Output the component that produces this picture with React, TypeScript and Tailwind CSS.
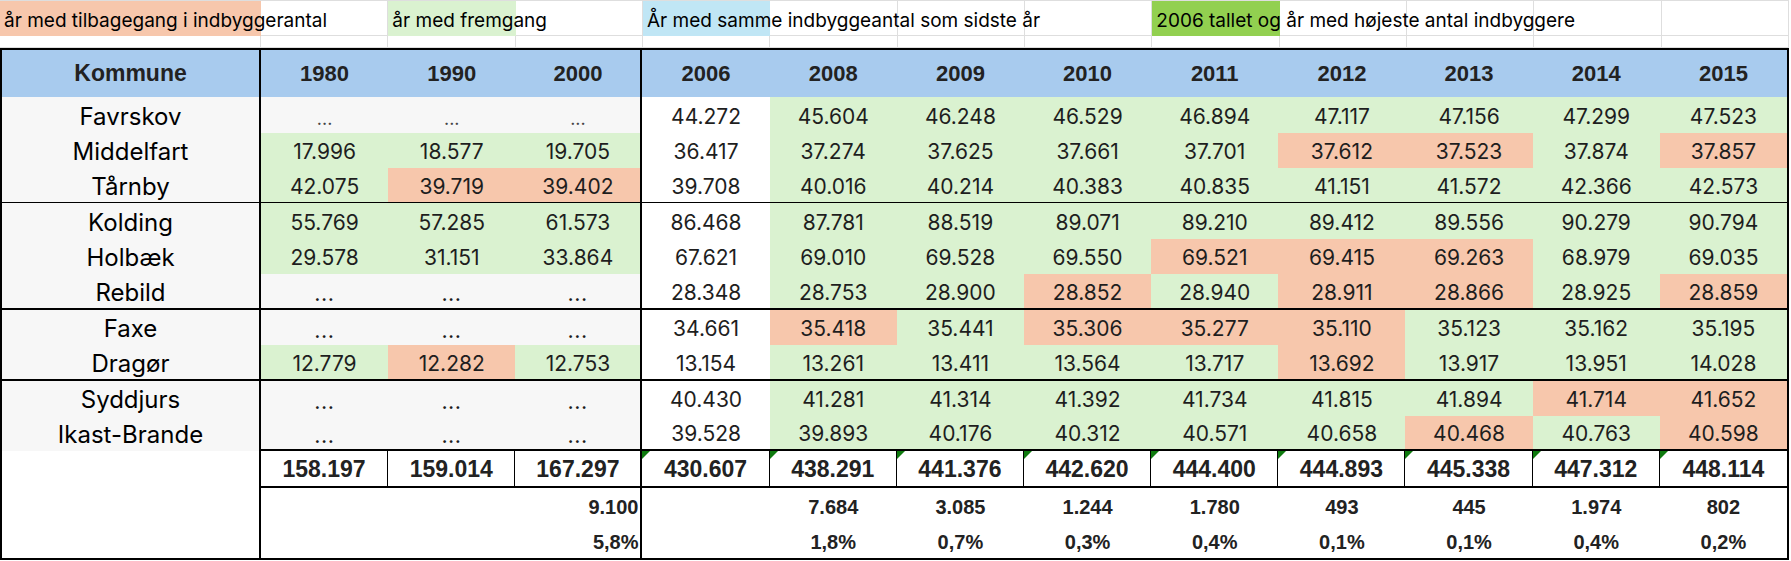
import type { ReactNode } from "react"

const fill: Record<string, string> = {
  g: "bg-[#f7f7f7]",
  W: "bg-white",
  G: "bg-[#daf2d0]",
  O: "bg-[#f7c7ac]",
}

const years = ["1980", "1990", "2000", "2006", "2008", "2009", "2010", "2011", "2012", "2013", "2014", "2015"]

const dots = ["...", "...", "..."]

const rows = [
  { name: "Favrskov", early: dots, f: "gggWGGGGGGGG", v: ["44.272", "45.604", "46.248", "46.529", "46.894", "47.117", "47.156", "47.299", "47.523"], thin: true },
  { name: "Middelfart", early: ["17.996", "18.577", "19.705"], f: "GGGWGGGGOOGO", v: ["36.417", "37.274", "37.625", "37.661", "37.701", "37.612", "37.523", "37.874", "37.857"] },
  { name: "Tårnby", early: ["42.075", "39.719", "39.402"], f: "GOOWGGGGGGGG", v: ["39.708", "40.016", "40.214", "40.383", "40.835", "41.151", "41.572", "42.366", "42.573"] },
  { name: "Kolding", early: ["55.769", "57.285", "61.573"], f: "GGGWGGGGGGGG", v: ["86.468", "87.781", "88.519", "89.071", "89.210", "89.412", "89.556", "90.279", "90.794"] },
  { name: "Holbæk", early: ["29.578", "31.151", "33.864"], f: "GGGWGGGOOOGG", v: ["67.621", "69.010", "69.528", "69.550", "69.521", "69.415", "69.263", "68.979", "69.035"] },
  { name: "Rebild", early: dots, f: "gggWGGOGOOGO", v: ["28.348", "28.753", "28.900", "28.852", "28.940", "28.911", "28.866", "28.925", "28.859"] },
  { name: "Faxe", early: dots, f: "gggWOGOOOGGG", v: ["34.661", "35.418", "35.441", "35.306", "35.277", "35.110", "35.123", "35.162", "35.195"] },
  { name: "Dragør", early: ["12.779", "12.282", "12.753"], f: "GOGWGGGGOGGG", v: ["13.154", "13.261", "13.411", "13.564", "13.717", "13.692", "13.917", "13.951", "14.028"] },
  { name: "Syddjurs", early: dots, f: "gggWGGGGGGOO", v: ["40.430", "41.281", "41.314", "41.392", "41.734", "41.815", "41.894", "41.714", "41.652"] },
  { name: "Ikast-Brande", early: dots, f: "gggWGGGGGOGO", v: ["39.528", "39.893", "40.176", "40.312", "40.571", "40.658", "40.468", "40.763", "40.598"] },
]

// line under a row (by index); the Kommune column skips the last one
const rowLine: Record<number, string> = {
  2: "border-b border-black",
  5: "border-b-2 border-black",
  7: "border-b-2 border-black",
  9: "border-b-2 border-black",
}

const totals = ["158.197", "159.014", "167.297", "430.607", "438.291", "441.376", "442.620", "444.400", "444.893", "445.338", "447.312", "448.114"]
const diff = ["7.684", "3.085", "1.244", "1.780", "493", "445", "1.974", "802"]
const pct = ["1,8%", "0,7%", "0,3%", "0,4%", "0,1%", "0,1%", "0,4%", "0,2%"]

const colLine = (i: number) => (i === 2 ? "border-r-2 border-r-black" : "")

function Legend({ color, children }: { color: string; children: ReactNode }) {
  return (
    <div className={`min-w-0 flex items-end pb-[5px] pl-1 border-b ${color}`}>
      <span className="relative z-10 whitespace-nowrap text-[19px] leading-none text-black">{children}</span>
    </div>
  )
}

function Blank() {
  return <div className="min-w-0 border-r border-b border-[#dedede]" />
}

export default function App() {
  return (
    <div className="w-[1791px] h-[561px] bg-white overflow-hidden font-['Inter','Liberation_Sans',sans-serif] text-[#1e1e1e]">
      {/* legend rows above the table */}
      <div className="grid grid-cols-[261px_repeat(12,minmax(0,1fr))] grid-rows-[35px_12px] w-[1789px] border-t border-[#dedede]">
        <Legend color="bg-[#f7c7ac] border-[#f7c7ac]">år med tilbagegang i indbyggerantal</Legend>
        <Blank />
        <Legend color="bg-[#daf2d0] border-[#daf2d0]">år med fremgang</Legend>
        <Blank />
        <Legend color="bg-[#c0e6f5] border-[#c0e6f5]">År med samme indbyggeantal som sidste år</Legend>
        <Blank />
        <Blank />
        <Blank />
        <Legend color="bg-[#92d050] border-[#92d050]">2006 tallet og år med højeste antal indbyggere</Legend>
        <Blank />
        <Blank />
        <Blank />
        <Blank />
        {Array.from({ length: 13 }).map((_, i) => (
          <Blank key={i} />
        ))}
      </div>

      {/* table */}
      <div className="grid grid-cols-[259px_repeat(12,minmax(0,1fr))] grid-rows-[47px_36px_35px_35px_36px_35px_36px_35px_36px_35px_35px_37px_36px_34px] w-[1789px] border-2 border-black">
        <div className="flex items-center justify-center bg-[#a8cbee] border-r-2 border-black font-['Liberation_Sans',sans-serif] font-bold text-[23px] text-[#222]">
          Kommune
        </div>
        {years.map((y, i) => (
          <div
            key={y}
            className={`flex items-center justify-center bg-[#a8cbee] font-['Liberation_Sans',sans-serif] font-bold text-[22px] text-[#222] ${colLine(i)}`}
          >
            {y}
          </div>
        ))}

        {rows.map((r, ri) => {
          const line = rowLine[ri] ?? ""
          const values = [...r.early, ...r.v]
          return [
            <div
              key={r.name}
              className={`flex items-center justify-center pt-[3px] bg-[#f7f7f7] border-r-2 border-r-black text-[24px] text-black ${ri === 9 ? "" : line}`}
            >
              {r.name}
            </div>,
            ...values.map((v, ci) => (
              <div
                key={r.name + ci}
                className={`flex items-center justify-center pt-[3px] text-[21px] ${fill[r.f[ci]]} ${line} ${colLine(ci)}`}
              >
                {v === "..." ? (
                  <span className={r.thin ? "text-[18px] text-[#444] pt-1" : "text-[18px] font-semibold tracking-[1px] pt-1"}>...</span>
                ) : (
                  v
                )}
              </div>
            )),
          ]
        })}

        {/* sum and growth rows */}
        <div className="row-span-3 bg-white border-r-2 border-black" />
        {totals.map((t, i) => (
          <div
            key={"t" + i}
            className={`relative flex items-center justify-center pt-[2px] border-b-2 border-b-black font-['Liberation_Sans',sans-serif] font-bold text-[23px] text-[#222] ${
              i === 2 ? "border-r-2 border-r-black" : i === 11 ? "" : "border-r border-r-black"
            }`}
          >
            {i >= 3 && (
              <span className="absolute left-0 top-0 w-0 h-0 border-t-[8px] border-r-[8px] border-t-[#0e7a0e] border-r-transparent" />
            )}
            {t}
          </div>
        ))}
        {[0, 1].map((k) => {
          const vals = k === 0 ? diff : pct
          return [
            <div key={"e" + k} />,
            <div key={"f" + k} />,
            <div
              key={"g" + k}
              className="flex items-center justify-end pr-[2px] pt-[2px] border-r-2 border-black font-['Liberation_Sans',sans-serif] font-bold text-[20px] text-[#222]"
            >
              {k === 0 ? "9.100" : "5,8%"}
            </div>,
            <div key={"h" + k} />,
            ...vals.map((v, i) => (
              <div
                key={"s" + k + i}
                className="flex items-center justify-center pt-[2px] font-['Liberation_Sans',sans-serif] font-bold text-[20px] text-[#222]"
              >
                {v}
              </div>
            )),
          ]
        })}
      </div>
    </div>
  )
}
